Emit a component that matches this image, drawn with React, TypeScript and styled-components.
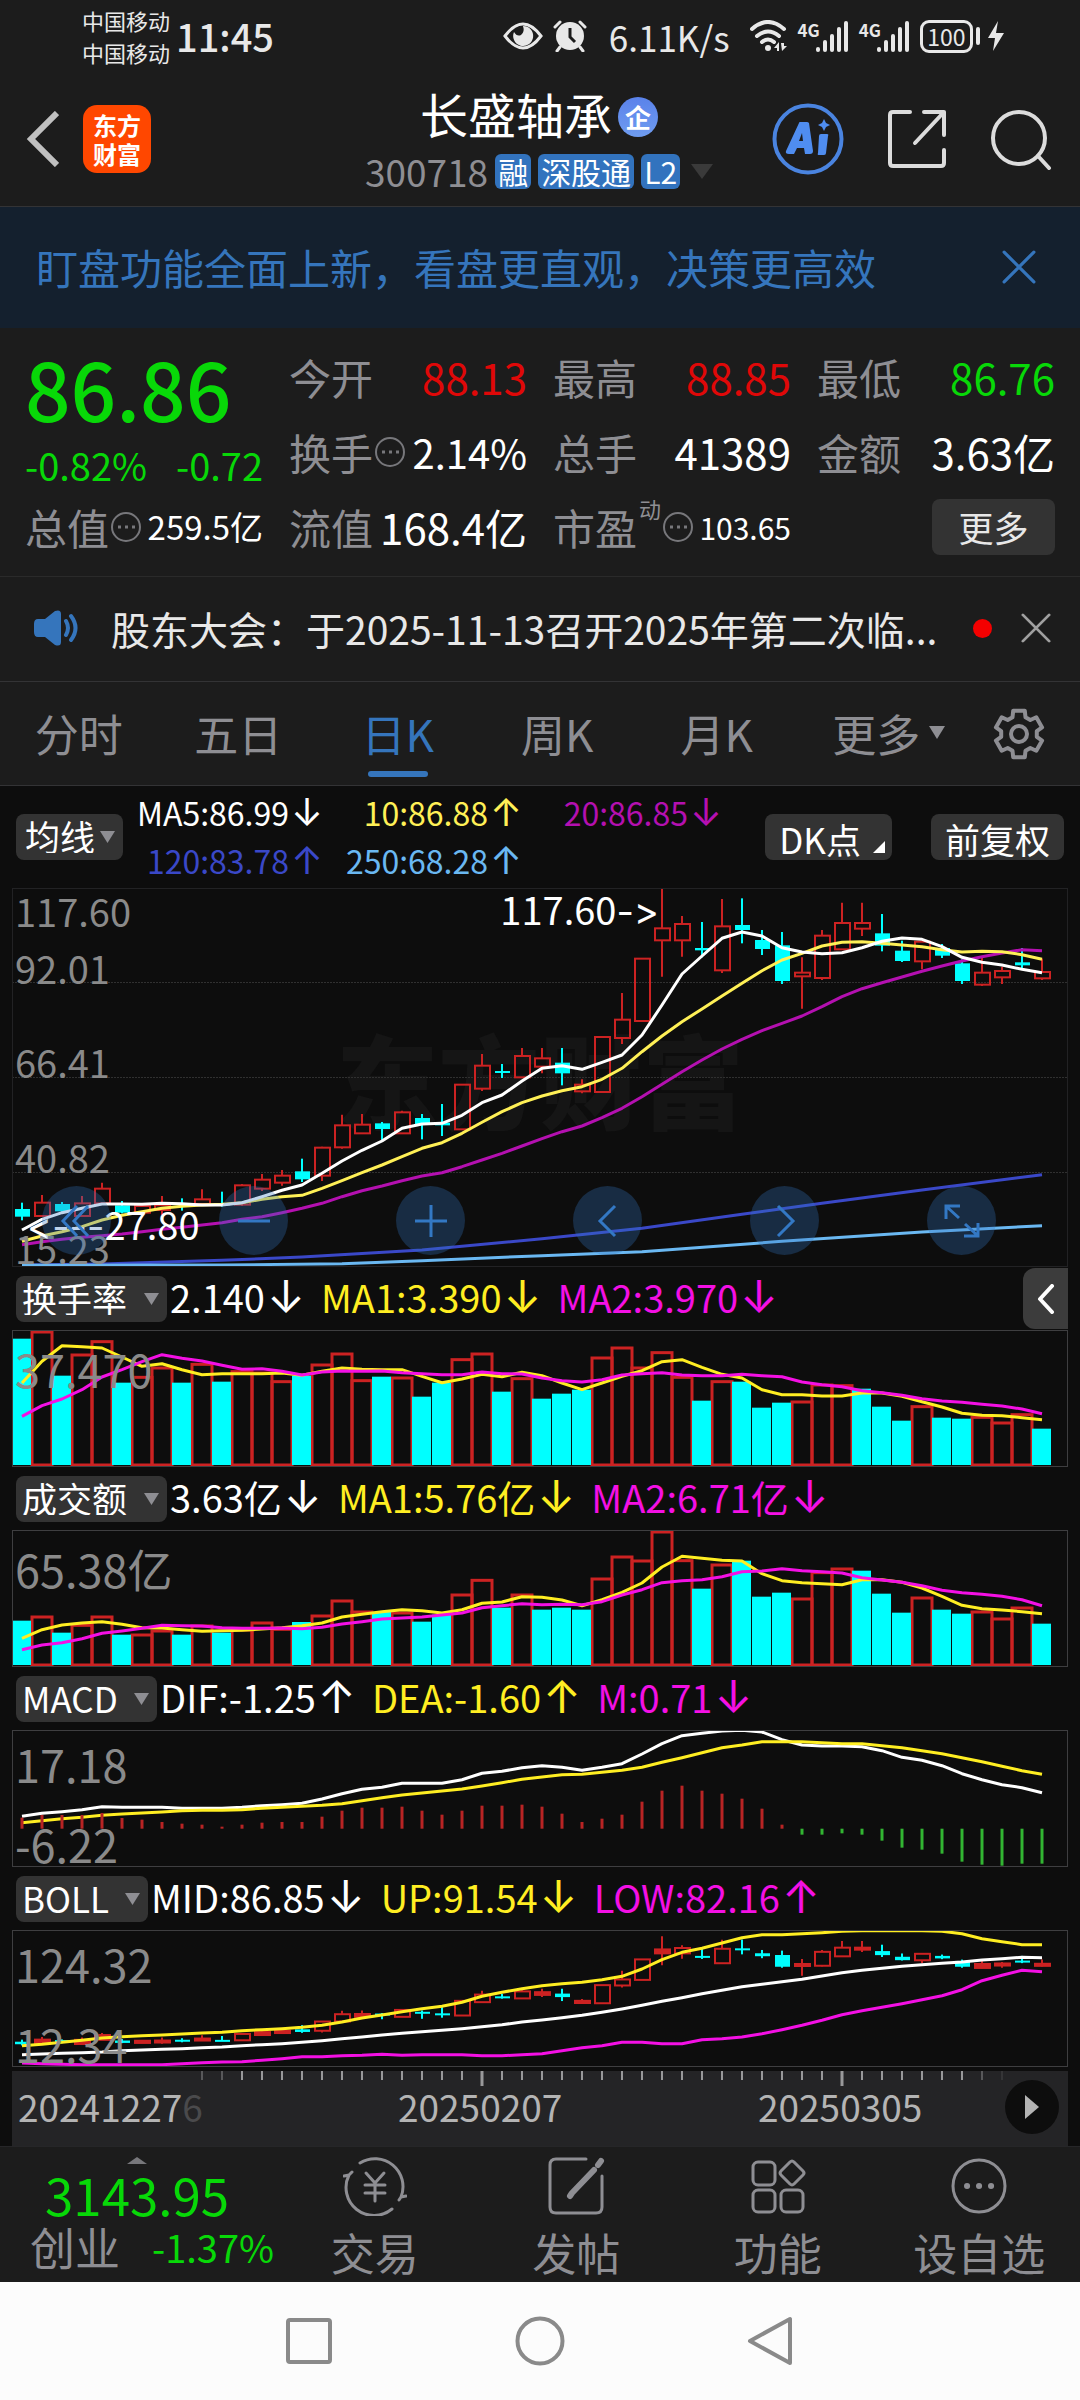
import React from "react";
import styled, { createGlobalStyle } from "styled-components";

const C = {
  panel: "#1c1c1c",
  chart: "#0d0d0d",
  line: "#333335",
  muted: "#8e8e93",
  text: "#e8e8e8",
  blue: "#3575bc",
  up: "#e00808",
  down: "#08d808",
  white: "#ffffff",
  yellow: "#ffee22",
  ma10: "#fff056",
  ma20: "#b410b0",
  ma120: "#3a48c8",
  ma250: "#6ab8f2",
  magenta: "#f410e4",
  candleUp: "#cc2222",
  cyan: "#00ffff",
};

const Global = createGlobalStyle`
  * { box-sizing: border-box; }
  body { margin: 0; background: ${C.chart}; }
  button, select { font: inherit; color: inherit; background: none; border: 0; padding: 0; margin: 0; }
  h1, p, dl, dd, dt { margin: 0; font-weight: 400; }
  svg { display: block; flex: none; }
`;

/* ---------- data ---------- */

// Each candle: rising flag, body top, body bottom, wick top, wick bottom (thirds of a pixel, panel top = 24)
const candles: [number, number, number, number, number][] = [
  [0, 987, 1010, 968, 1021], [1, 968, 1008, 945, 1010], [0, 972, 994, 966, 1000], [1, 970, 1008, 948, 1010],
  [1, 926, 970, 908, 972], [0, 976, 998, 963, 1000], [1, 978, 998, 976, 1000], [1, 976, 990, 948, 1005],
  [0, 969, 974, 955, 992], [1, 958, 972, 928, 974], [0, 970, 976, 935, 980], [1, 916, 974, 912, 978],
  [1, 899, 926, 882, 933], [1, 887, 908, 870, 917], [0, 874, 898, 836, 906], [1, 803, 887, 800, 903],
  [1, 736, 802, 704, 806], [1, 734, 760, 702, 762], [0, 730, 747, 726, 782], [1, 697, 760, 692, 762],
  [0, 714, 732, 702, 778], [0, 728, 736, 672, 768], [1, 614, 748, 612, 750], [1, 557, 626, 522, 633],
  [0, 573, 579, 552, 594], [1, 528, 592, 504, 594], [1, 535, 560, 504, 580], [0, 548, 580, 504, 616],
  [1, 614, 634, 598, 640], [1, 471, 636, 469, 638], [1, 419, 474, 339, 492], [1, 236, 423, 234, 425],
  [1, 145, 181, 24, 290], [1, 132, 181, 108, 230], [0, 204, 211, 126, 232], [1, 139, 271, 57, 279],
  [0, 135, 150, 55, 190], [0, 180, 207, 150, 225], [0, 196, 303, 156, 312], [1, 278, 289, 232, 386],
  [1, 167, 294, 150, 300], [1, 129, 208, 68, 210], [1, 129, 146, 68, 168], [0, 160, 197, 102, 214],
  [0, 212, 243, 182, 246], [1, 185, 244, 183, 268], [0, 204, 227, 192, 234], [0, 250, 303, 238, 312],
  [1, 278, 314, 232, 318], [1, 273, 292, 260, 312], [0, 247, 256, 204, 270], [1, 276, 295, 236, 300],
];

const ma5 = [1050, 1018, 998, 985, 972, 972, 973, 970, 971, 975, 975, 968, 950, 931, 915, 880, 843, 811, 783, 745, 732, 730, 706, 668, 645, 603, 565, 557, 568, 547, 525, 465, 375, 282, 228, 175, 156, 168, 203, 216, 221, 218, 203, 184, 174, 178, 200, 232, 247, 255, 268, 278];
const ma10 = [1084, 1068, 1055, 1040, 1020, 1006, 995, 985, 979, 975, 973, 968, 958, 950, 946, 925, 902, 878, 855, 830, 805, 788, 760, 727, 695, 668, 648, 632, 620, 598, 565, 515, 468, 425, 387, 348, 310, 272, 240, 220, 198, 187, 185, 190, 195, 200, 209, 216, 214, 215, 224, 238];
const ma20 = [1094, 1085, 1078, 1072, 1067, 1062, 1055, 1048, 1042, 1035, 1028, 1018, 1010, 998, 985, 970, 950, 932, 918, 902, 888, 878, 860, 840, 820, 798, 776, 755, 738, 713, 685, 650, 613, 575, 540, 507, 478, 452, 430, 408, 380, 350, 326, 308, 291, 274, 258, 243, 230, 219, 209, 212];
const ma120: [number, number][] = [[0, 1155], [4, 1152], [10, 1141], [14, 1131], [20, 1110], [26, 1076], [31, 1045], [36, 1003], [40, 970], [45, 930], [51, 884]];
const ma250: [number, number][] = [[0, 1156], [10, 1155], [16, 1151], [20, 1142], [26, 1127], [31, 1115], [38, 1084], [45, 1056], [51, 1037]];

const fallingVolume = new Set([0, 2, 5, 8, 10, 14, 18, 20, 21, 24, 26, 27, 28, 34, 36, 37, 38, 42, 43, 44, 46, 47, 51]);
const turnover = {
  top: 181,
  bars: [207, 184, 318, 253, 213, 339, 320, 292, 339, 281, 336, 303, 307, 333, 318, 283, 250, 330, 321, 322, 381, 339, 267, 250, 366, 324, 387, 372, 360, 262, 232, 292, 246, 320, 393, 333, 336, 414, 399, 394, 343, 345, 357, 411, 453, 408, 444, 447, 440, 457, 432, 477],
  a: [340, 275, 228, 231, 235, 262, 290, 282, 300, 315, 312, 312, 312, 310, 317, 305, 295, 299, 300, 300, 320, 339, 328, 314, 321, 308, 318, 340, 360, 340, 320, 303, 276, 270, 293, 314, 325, 360, 375, 375, 379, 379, 370, 370, 380, 396, 412, 431, 437, 438, 444, 450],
  b: [440, 408, 388, 360, 322, 300, 276, 255, 266, 274, 287, 299, 297, 305, 316, 307, 304, 305, 304, 309, 312, 315, 315, 307, 312, 313, 325, 333, 337, 330, 316, 312, 309, 316, 318, 318, 314, 318, 321, 337, 345, 351, 363, 369, 377, 387, 394, 398, 404, 409, 418, 432],
};
const amount = {
  top: 781,
  bars: [1053, 1039, 1089, 1064, 1039, 1095, 1093, 1081, 1095, 1066, 1089, 1078, 1057, 1076, 1057, 1036, 991, 1024, 1027, 1027, 1056, 1035, 973, 929, 1014, 973, 1020, 1014, 1020, 925, 859, 871, 784, 870, 957, 883, 873, 981, 969, 985, 906, 895, 903, 972, 1029, 982, 1020, 1032, 1024, 1045, 1012, 1062],
  a: [1106, 1080, 1066, 1060, 1056, 1064, 1074, 1075, 1080, 1085, 1083, 1082, 1078, 1074, 1068, 1060, 1042, 1034, 1026, 1020, 1023, 1030, 1020, 1001, 997, 981, 983, 991, 1008, 990, 968, 940, 892, 860, 866, 872, 874, 912, 933, 939, 942, 945, 930, 930, 938, 955, 980, 1007, 1017, 1021, 1026, 1032],
  b: [1140, 1126, 1119, 1107, 1091, 1084, 1076, 1067, 1068, 1069, 1074, 1076, 1076, 1075, 1077, 1073, 1063, 1056, 1048, 1045, 1042, 1036, 1030, 1014, 1008, 1002, 1005, 1004, 1005, 996, 976, 960, 939, 933, 930, 921, 906, 904, 897, 903, 906, 910, 924, 931, 938, 948, 962, 969, 974, 980, 990, 1008],
};
const macd = {
  bars: [444, 436, 436, 436, 430, 445, 450, 457, 462, 465, 471, 465, 459, 457, 457, 441, 423, 414, 414, 411, 423, 435, 423, 408, 408, 405, 411, 432, 457, 447, 435, 396, 363, 348, 363, 372, 387, 417, 465, 495, 495, 491, 495, 513, 534, 540, 552, 576, 585, 588, 582, 582],
  dif: [440, 431, 426, 420, 411, 413, 413, 413, 416, 416, 416, 413, 408, 405, 401, 388, 372, 359, 353, 341, 341, 341, 330, 311, 305, 294, 288, 293, 302, 293, 282, 253, 222, 198, 191, 184, 182, 187, 210, 226, 229, 229, 231, 243, 263, 272, 288, 312, 330, 345, 354, 369],
  dea: [459, 453, 447, 443, 437, 433, 430, 427, 423, 422, 422, 420, 416, 413, 410, 407, 402, 393, 384, 376, 370, 364, 358, 349, 339, 329, 322, 315, 314, 308, 302, 293, 278, 264, 249, 234, 226, 216, 216, 216, 219, 222, 222, 228, 234, 243, 252, 264, 276, 290, 303, 314],
};
const boll = {
  up: [1128, 1124, 1118, 1112, 1105, 1101, 1098, 1096, 1093, 1090, 1088, 1083, 1080, 1077, 1073, 1067, 1057, 1045, 1036, 1026, 1017, 1010, 998, 980, 968, 957, 948, 942, 938, 930, 920, 898, 870, 848, 836, 820, 804, 795, 795, 792, 789, 785, 783, 783, 783, 783, 785, 792, 807, 816, 825, 825],
  mid: [1155, 1153, 1151, 1149, 1147, 1143, 1141, 1139, 1137, 1134, 1132, 1128, 1125, 1122, 1118, 1113, 1107, 1102, 1096, 1091, 1086, 1082, 1077, 1071, 1065, 1057, 1051, 1044, 1037, 1028, 1018, 1007, 995, 984, 972, 962, 951, 944, 936, 929, 919, 909, 902, 896, 890, 885, 881, 877, 871, 867, 863, 864],
  low: [1180, 1182, 1184, 1185, 1185, 1185, 1185, 1185, 1182, 1179, 1177, 1176, 1172, 1167, 1161, 1161, 1158, 1157, 1154, 1157, 1155, 1155, 1155, 1158, 1158, 1155, 1152, 1143, 1134, 1128, 1118, 1118, 1122, 1122, 1110, 1107, 1102, 1092, 1080, 1067, 1052, 1035, 1023, 1013, 1002, 990, 978, 960, 933, 917, 902, 906],
};

const cx = (i: number) => i * 20 + 10;
const series = (values: number[], top: number) =>
  values.map((v, i) => `${cx(i)},${((v - top) / 3).toFixed(1)}`).join(" ");

/* ---------- chart drawings ---------- */

const Plot = styled.svg<{ $h: number }>`
  width: 100%;
  height: ${(p) => p.$h}px;
`;

function Line({ points, color, w = 3 }: { points: string; color: string; w?: number }) {
  return <polyline points={points} fill="none" stroke={color} strokeWidth={w} strokeLinejoin="round" />;
}

function Candles({ y, thin }: { y: (v: number) => number; thin?: boolean }) {
  return (
    <g>
      {candles.map(([up, t, b, hi, lo], i) => {
        const x = cx(i);
        const top = y(t);
        const h = Math.max(y(b) - top, 2);
        return up ? (
          <g key={i} stroke={C.candleUp} strokeWidth="2">
            <path d={`M${x} ${y(hi)}V${top}M${x} ${top + h}V${Math.max(y(lo), top + h)}`} />
            <rect x={x - 7} y={top} width="15" height={h} fill={thin && h < 5 ? C.candleUp : "none"} />
          </g>
        ) : (
          <g key={i} fill={C.cyan}>
            <rect x={x - 1} y={y(hi)} width="2" height={y(lo) - y(hi)} />
            <rect x={x - 7} y={top} width="15" height={h} />
          </g>
        );
      })}
    </g>
  );
}

function PricePlot() {
  const y = (v: number) => (v - 24) / 3;
  const sparse = (s: [number, number][]) => s.map(([i, v]) => `${cx(i)},${y(v).toFixed(1)}`).join(" ");
  return (
    <Plot $h={377} viewBox="1 1 1054 377" preserveAspectRatio="none" role="img" aria-label="日K线图">
      {[94, 189, 284].map((g) => (
        <path key={g} d={`M0 ${g + 0.5}H1056`} stroke="#303030" strokeDasharray="2 1" />
      ))}
      <Candles y={y} />
      <Line points={sparse(ma120)} color={C.ma120} />
      <Line points={sparse(ma250)} color={C.ma250} />
      <Line points={series(ma20, 24)} color={C.ma20} />
      <Line points={series(ma10, 24)} color={C.ma10} />
      <Line points={series(ma5, 24)} color={C.white} />
    </Plot>
  );
}

function BarPlot({ data, label }: { data: typeof turnover; label: string }) {
  return (
    <Plot $h={135} viewBox="1 1 1054 135" preserveAspectRatio="none" role="img" aria-label={label}>
      {data.bars.map((v, i) => {
        const y = (v - data.top) / 3;
        return fallingVolume.has(i) ? null : (
          <rect key={i} x={i * 20} y={y + 1} width="20" height={134 - y} fill="none" stroke={C.candleUp} strokeWidth="3" />
        );
      })}
      {data.bars.map((v, i) => {
        const y = (v - data.top) / 3;
        return fallingVolume.has(i) ? <rect key={i} x={i * 20} y={y} width="19" height={135 - y} fill={C.cyan} /> : null;
      })}
      <Line points={series(data.a, data.top)} color={C.yellow} />
      <Line points={series(data.b, data.top)} color={C.magenta} />
    </Plot>
  );
}

function MacdPlot() {
  return (
    <Plot $h={135} viewBox="1 1 1054 135" preserveAspectRatio="none" role="img" aria-label="MACD">
      <Line points={series(macd.dif, 181)} color={C.white} />
      <Line points={series(macd.dea, 181)} color={C.yellow} />
      {macd.bars.map((v, i) => (
        <path key={i} d={`M${cx(i)} 98.7V${(v - 181) / 3}`} stroke={v > 477 ? "#32b432" : "#b82424"} strokeWidth="3" />
      ))}
    </Plot>
  );
}

function BollPlot() {
  const y = (v: number) => (6.72 + (v - 24) / 11.08) * 1.2145 - 2;
  return (
    <Plot $h={135} viewBox="1 1 1054 135" preserveAspectRatio="none" role="img" aria-label="BOLL">
      <Candles y={y} thin />
      <Line points={series(boll.up, 781)} color={C.yellow} />
      <Line points={series(boll.mid, 781)} color={C.white} />
      <Line points={series(boll.low, 781)} color={C.magenta} />
    </Plot>
  );
}

/* ---------- shared parts ---------- */

const Page = styled.main`
  display: flex;
  flex-direction: column;
  min-height: 100vh;
  color: ${C.text};
  font-family: "Noto Sans CJK SC", "Noto Sans", sans-serif;
  line-height: 1;
  white-space: nowrap;
`;

const IconButton = styled.button`
  display: flex;
  align-items: center;
  justify-content: center;
`;

const Trend = styled.span`
  margin-left: 2px;
  font-family: "Inter", "DejaVu Sans", sans-serif;
  font-size: 1.2em;
  line-height: 0;
`;

const Pointer = styled.span`
  font-family: "Inter", "DejaVu Sans", sans-serif;
  font-feature-settings: "calt" 0;
  line-height: 0;
`;

function Close({ size, color }: { size: number; color: string }) {
  return (
    <svg width={size} height={size} viewBox="0 0 32 32" stroke={color} strokeWidth="3" strokeLinecap="round">
      <path d="M2 2 30 30M30 2 2 30" />
    </svg>
  );
}

function Caret({ w, h, color }: { w: number; h: number; color: string }) {
  return (
    <svg width={w} height={h} viewBox="0 0 10 10" preserveAspectRatio="none">
      <path d="M0 0H10L5 10Z" fill={color} />
    </svg>
  );
}

/* ---------- status bar ---------- */

const Status = styled.div`
  display: flex;
  align-items: center;
  justify-content: space-between;
  height: 72px;
  padding: 0 76px 0 82px;
  background: ${C.panel};
`;
const StatusSide = styled.div<{ $gap: number }>`
  display: flex;
  align-items: center;
  gap: ${(p) => p.$gap}px;
`;
const Carrier = styled.div`
  font-size: 22px;
  line-height: 32px;
`;
const Clock = styled.time`
  font-size: 38px;
  font-weight: 500;
`;
const Speed = styled.span`
  margin: 0 10px 0 12px;
  font-size: 35px;
`;
const Signal = styled.span`
  display: flex;
  align-items: flex-start;
`;
const Gen = styled.span`
  margin-right: -4px;
  font-size: 17px;
  font-weight: 700;
`;
const Battery = styled.span`
  display: grid;
  place-items: center;
  width: 53px;
  height: 33px;
  border: 3px solid ${C.text};
  border-radius: 9px;
  font-size: 23px;
`;

function Bars() {
  return (
    <svg width="33" height="31" viewBox="0 0 33 31" fill={C.text}>
      {[5, 12, 18, 25, 31].map((h, i) => (
        <rect key={h} x={i * 7} y={31 - h} width="4" height={h} rx="2" />
      ))}
    </svg>
  );
}

function StatusBar() {
  return (
    <Status>
      <StatusSide $gap={6}>
        <Carrier>
          中国移动
          <br />
          中国移动
        </Carrier>
        <Clock>11:45</Clock>
      </StatusSide>
      <StatusSide $gap={10}>
        <svg width="40" height="28" viewBox="0 0 40 28" fill="none" stroke={C.text} strokeWidth="3">
          <path d="M2 14Q20 -10 38 14Q20 38 2 14Z" />
          <path d="M20 4a10 10 0 1 1-9 6q3 5 7 3 4-3 2-9Z" fill={C.text} stroke="none" />
        </svg>
        <svg width="34" height="32" viewBox="0 0 34 32" fill={C.text}>
          <circle cx="17" cy="16" r="14" />
          <path d="M17 8V17L22 22" stroke={C.panel} strokeWidth="3" fill="none" />
          <path d="M2 7 7 2M32 7 27 2M7 27 4 31M27 27 30 31" stroke={C.text} strokeWidth="3" strokeLinecap="round" />
        </svg>
        <Speed>6.11K/s</Speed>
        <svg width="38" height="32" viewBox="0 0 38 32" fill="none" stroke={C.text} strokeWidth="4" strokeLinecap="round">
          <path d="M2 9Q18 -5 34 9M7 16Q18 7 29 16M12 22Q18 17 24 22" />
          <circle cx="18" cy="28" r="3" fill={C.text} stroke="none" />
          <path d="M24 28 29 22V31H27V28ZM32 31 37 26H34V23H31Z" fill={C.text} stroke="none" />
        </svg>
        <Signal>
          <Gen>4G</Gen>
          <Bars />
        </Signal>
        <Signal>
          <Gen>4G</Gen>
          <Bars />
        </Signal>
        <StatusSide $gap={3}>
          <Battery>100</Battery>
          <svg width="28" height="30" viewBox="0 0 28 30" fill={C.text}>
            <rect x="0" y="6" width="4" height="18" rx="2" />
            <path d="M22 0 12 17H19L17 30 28 12H20Z" />
          </svg>
        </StatusSide>
      </StatusSide>
    </Status>
  );
}

/* ---------- title bar ---------- */

const Header = styled.header`
  display: grid;
  grid-template-columns: 1fr auto 1fr;
  align-items: center;
  height: 135px;
  padding: 0 28px 0 26px;
  background: ${C.panel};
  border-bottom: 1px solid ${C.line};
`;
const HeadLeft = styled.div`
  display: flex;
  align-items: center;
  gap: 24px;
`;
const HeadRight = styled.div`
  display: flex;
  align-items: center;
  justify-content: flex-end;
  gap: 43px;
`;
const Logo = styled.span`
  display: grid;
  place-items: center;
  align-content: center;
  width: 68px;
  height: 68px;
  border-radius: 14px;
  background: #ff4700;
  color: #fff;
  font-size: 24px;
  font-weight: 700;
  line-height: 29px;
`;
const HeadMid = styled.div`
  display: flex;
  flex-direction: column;
  align-items: center;
  gap: 16px;
`;
const TitleRow = styled.div`
  display: flex;
  align-items: flex-end;
  gap: 6px;
`;
const Title = styled.h1`
  font-size: 48px;
  color: #fff;
`;
const Ent = styled.span`
  display: grid;
  place-items: center;
  width: 40px;
  height: 40px;
  border-radius: 50%;
  background: linear-gradient(#5a82ea, #6f9cf0);
  color: #fff;
  font-size: 26px;
  font-weight: 700;
`;
const CodeRow = styled.div`
  display: flex;
  align-items: center;
  gap: 7px;
  color: ${C.muted};
  font-size: 37px;
`;
const Tag = styled.span`
  padding: 0 3px;
  border-radius: 6px;
  background: #3273be;
  color: #fff;
  font-size: 30px;
  line-height: 35px;
`;
const CodeCaret = styled.button`
  display: flex;
  padding: 0 0 0 4px;
`;

function TitleBar() {
  return (
    <Header>
      <HeadLeft>
        <IconButton aria-label="返回">
          <svg width="33" height="56" viewBox="0 0 33 56" fill="none" stroke="#c0c0c0" strokeWidth="6">
            <path d="M31 2 5 28 31 54" />
          </svg>
        </IconButton>
        <Logo>
          <span>东方</span>
          <span>财富</span>
        </Logo>
      </HeadLeft>
      <HeadMid>
        <TitleRow>
          <Title>长盛轴承</Title>
          <Ent>企</Ent>
        </TitleRow>
        <CodeRow>
          <span>300718</span>
          <Tag>融</Tag>
          <Tag>深股通</Tag>
          <Tag>L2</Tag>
          <CodeCaret aria-label="展开">
            <Caret w={22} h={15} color="#3a3a3a" />
          </CodeCaret>
        </CodeRow>
      </HeadMid>
      <HeadRight>
        <IconButton aria-label="Ai">
          <svg width="72" height="72" viewBox="0 0 72 72" fill="#4f8df0">
            <circle cx="36" cy="36" r="33.5" fill="none" stroke="#4a84e0" strokeWidth="4" />
            <path fillRule="evenodd" d="M27 20Q27 19 28 19H35Q36 19 37 20L41 48Q41 51 38 51H33L32 45H25L22 51H17Q13 51 14 48ZM30 30 27 38H31Z" />
            <path d="M49 31H55Q57 31 56 33L54 50Q54 52 52 52H47Q45 52 46 50L47 33Q47 31 49 31ZM52 16 54 20 58 22 54 24 52 28 50 24 46 22 50 20Z" />
          </svg>
        </IconButton>
        <IconButton aria-label="分享">
          <svg width="60" height="60" viewBox="0 0 60 60" fill="none" stroke="#dcdcdc" strokeWidth="4" strokeLinecap="round" strokeLinejoin="round">
            <path d="M23 3H6Q3 3 3 6V54Q3 57 6 57H54Q57 57 57 54V41" />
            <path d="M37 3H57V26M57 3 28 34" />
          </svg>
        </IconButton>
        <IconButton aria-label="搜索">
          <svg width="62" height="62" viewBox="0 0 62 62" fill="none" stroke="#dcdcdc" strokeWidth="4" strokeLinecap="round">
            <circle cx="29" cy="30" r="26" />
            <path d="M48 48 59 60" />
          </svg>
        </IconButton>
      </HeadRight>
    </Header>
  );
}

/* ---------- banner, quote, news ---------- */

const Banner = styled.aside`
  display: flex;
  align-items: center;
  justify-content: space-between;
  height: 121px;
  padding: 0 44px 2px 36px;
  background: #14202e;
  color: ${C.blue};
  font-size: 42px;
`;

const Quote = styled.section`
  display: grid;
  grid-template-columns: repeat(4, 1fr);
  grid-template-rows: repeat(3, 75px);
  column-gap: 26px;
  padding: 11px 25px 12px;
  background: ${C.panel};
  border-bottom: 1px solid #2a2a2a;
`;
const Price = styled.div`
  display: flex;
  flex-direction: column;
  justify-content: space-between;
  grid-row: span 2;
  padding: 8px 0 5px;
  color: ${C.down};
`;
const Last = styled.strong`
  font-size: 80px;
  font-weight: 500;
`;
const Change = styled.div`
  display: flex;
  justify-content: space-between;
  font-size: 38px;
`;
const Cell = styled.dl`
  display: flex;
  align-items: center;
  justify-content: space-between;
`;
const Term = styled.dt`
  display: flex;
  align-items: center;
  gap: 2px;
  color: ${C.muted};
  font-size: 42px;
`;
const Super = styled.sup`
  align-self: flex-start;
  font-size: 22px;
  line-height: 4px;
`;
const Value = styled.dd<{ $size: number; $color: string }>`
  font-size: ${(p) => p.$size}px;
  color: ${(p) => p.$color};
`;
const More = styled.button`
  align-self: center;
  justify-self: end;
  width: 123px;
  height: 56px;
  border-radius: 8px;
  background: #333;
  font-size: 35px;
`;

function Info() {
  return (
    <svg width="30" height="30" viewBox="0 0 30 30" fill="none" stroke="#77777b" strokeWidth="2">
      <circle cx="15" cy="15" r="14" />
      <path d="M7 15h3M14 15h3M21 15h3" strokeWidth="3" />
    </svg>
  );
}

type Field = { label: string; value: string; color?: string; size?: number; info?: boolean; sup?: string };
const fields: Field[] = [
  { label: "今开", value: "88.13", color: C.up },
  { label: "最高", value: "88.85", color: C.up },
  { label: "最低", value: "86.76", color: C.down },
  { label: "换手", value: "2.14%", info: true, size: 40 },
  { label: "总手", value: "41389" },
  { label: "金额", value: "3.63亿" },
  { label: "总值", value: "259.5亿", info: true, size: 33 },
  { label: "流值", value: "168.4亿" },
  { label: "市盈", value: "103.65", info: true, size: 30, sup: "动" },
];

function QuotePanel() {
  return (
    <Quote>
      <Price>
        <Last>86.86</Last>
        <Change>
          <span>-0.82%</span>
          <span>-0.72</span>
        </Change>
      </Price>
      {fields.map((f) => (
        <Cell key={f.label}>
          <Term>
            {f.label}
            {f.sup && <Super>{f.sup}</Super>}
            {f.info && <Info />}
          </Term>
          <Value $size={f.size ?? 42} $color={f.color ?? "#fff"}>
            {f.value}
          </Value>
        </Cell>
      ))}
      <More>更多</More>
    </Quote>
  );
}

const News = styled.section`
  display: flex;
  align-items: center;
  height: 105px;
  padding: 0 29px 2px 33px;
  background: ${C.panel};
  border-bottom: 1px solid ${C.line};
`;
const Headline = styled.a`
  flex: 1;
  margin-left: 32px;
  overflow: hidden;
  color: inherit;
  text-decoration: none;
  font-size: 39px;
  line-height: 56px;
`;
const Dot = styled.span`
  width: 19px;
  height: 19px;
  margin-right: 29px;
  border-radius: 50%;
  background: #f40000;
`;

function NewsBar() {
  return (
    <News>
      <svg width="46" height="36" viewBox="0 0 46 36" fill={C.blue}>
        <path d="M5 9H12L22 1Q28 -1 28 4V32Q28 37 22 35L12 27H5Q1 27 1 22V14Q1 9 5 9Z" />
        <path d="M33 11Q37 18 33 25M38 6Q47 18 38 30" fill="none" stroke={C.blue} strokeWidth="4" strokeLinecap="round" />
      </svg>
      <Headline href="#news">股东大会：于2025-11-13召开2025年第二次临...</Headline>
      <Dot />
      <IconButton aria-label="关闭公告">
        <Close size={30} color="#a0a0a0" />
      </IconButton>
    </News>
  );
}

/* ---------- period tabs ---------- */

const Tabs = styled.nav`
  display: flex;
  height: 104px;
  background: ${C.panel};
  border-bottom: 1px solid ${C.line};
`;
const Tab = styled.button<{ $on?: boolean }>`
  position: relative;
  display: flex;
  flex: 1;
  align-items: center;
  justify-content: center;
  padding: 0 2px 2px 0;
  color: ${(p) => (p.$on ? C.blue : C.muted)};
  font-size: 44px;
  &::after {
    content: "";
    display: ${(p) => (p.$on ? "block" : "none")};
    position: absolute;
    bottom: 8px;
    width: 60px;
    height: 6px;
    border-radius: 3px;
    background: ${C.blue};
  }
`;
const TabCaret = styled.span`
  position: absolute;
  right: 12px;
`;
const Gear = styled(IconButton)`
  width: 123px;
`;

const gearPath = (() => {
  const pts: string[] = [];
  for (let k = 0; k < 6; k++) {
    for (const [da, r] of [[-21, 18], [-14, 24], [14, 24], [21, 18]]) {
      const a = ((k * 60 - 90 + da) * Math.PI) / 180;
      pts.push(`${(26 + r * Math.cos(a)).toFixed(1)} ${(26 + r * Math.sin(a)).toFixed(1)}`);
    }
  }
  return `M${pts.join("L")}Z`;
})();

function PeriodTabs() {
  return (
    <Tabs>
      {["分时", "五日", "日K", "周K", "月K"].map((t) => (
        <Tab key={t} $on={t === "日K"}>
          {t}
        </Tab>
      ))}
      <Tab>
        更多
        <TabCaret>
          <Caret w={16} h={13} color={C.muted} />
        </TabCaret>
      </Tab>
      <Gear aria-label="设置">
        <svg width="52" height="52" viewBox="0 0 52 52" fill="none" stroke={C.muted} strokeWidth="4" strokeLinejoin="round">
          <path d={gearPath} />
          <circle cx="26" cy="26" r="8" />
        </svg>
      </Gear>
    </Tabs>
  );
}

/* ---------- charts ---------- */

const Charts = styled.section`
  flex: 1;
  padding: 0 12px;
  background: ${C.chart};
`;
const Toolbar = styled.div`
  display: flex;
  align-items: center;
  height: 102px;
  padding: 0 4px;
`;
const Picker = styled.label<{ $gap: number; $pad: number }>`
  display: flex;
  align-items: center;
  gap: ${(p) => p.$gap}px;
  height: 46px;
  padding: 0 8px 0 ${(p) => p.$pad}px;
  border-radius: 8px;
  background: #333;
  color: #fff;
  font-size: 35px;
`;
const PickerSelect = styled.select`
  appearance: none;
  height: 46px;
  padding-bottom: 3px;
`;
const Averages = styled.div`
  display: grid;
  grid-template-columns: auto 166px 167px;
  column-gap: 33px;
  margin-left: 14px;
  padding-bottom: 3px;
  justify-items: end;
  font-size: 32px;
  line-height: 48px;
`;
const Tint = styled.span<{ $color: string }>`
  color: ${(p) => p.$color};
`;
const ToolButtons = styled.div`
  display: flex;
  gap: 39px;
  margin-left: auto;
  color: #fff;
  font-size: 35px;
`;
const Tool = styled.button`
  display: flex;
  align-items: flex-end;
  height: 46px;
  padding: 0 14px;
  border-radius: 8px;
  background: #333;
  line-height: 43px;
`;
const ToolCorner = styled.svg`
  margin: 0 -7px 7px 12px;
`;

const Frame = styled.div<{ $line: string }>`
  position: relative;
  border: 1px solid ${(p) => p.$line};
`;
const Scale = styled.span<{ $top: number; $size: number }>`
  position: absolute;
  top: ${(p) => p.$top}px;
  left: 2px;
  color: #8a8a8a;
  font-size: ${(p) => p.$size}px;
`;
const Watermark = styled.span`
  position: absolute;
  inset: 0;
  display: grid;
  place-items: center;
  color: #151515;
  font-size: 102px;
  font-weight: 900;
  line-height: 80px;
`;
const PlotLayer = styled.div`
  position: relative;
`;
const Peak = styled.span`
  position: absolute;
  top: 1px;
  right: 408px;
  color: #fff;
  font-size: 38px;
`;
const Trough = styled.span`
  position: absolute;
  top: 316px;
  left: 14px;
  color: #fff;
  font-size: 38px;
`;
const Pads = styled.div`
  position: absolute;
  left: 29px;
  right: 71px;
  bottom: 11px;
  display: flex;
  justify-content: space-between;
`;
const Pad = styled.button`
  display: grid;
  place-items: center;
  width: 69px;
  height: 69px;
  border-radius: 50%;
  background: rgba(50, 117, 193, 0.3);
`;

const pads: [string, string][] = [
  ["最左", "M18 3 4 18 18 33M29 3 15 18 29 33"],
  ["缩小", "M2 18H34"],
  ["放大", "M2 18H34M18 2V34"],
  ["左移", "M25 3 10 18 25 33"],
  ["右移", "M11 3 26 18 11 33"],
  ["全屏", "M2 16V3H16M3 4 15 15M34 20V33H20M33 32 21 21"],
];

function PriceChart() {
  return (
    <Frame $line="#222224">
      <Watermark>东方财富</Watermark>
      <PlotLayer>
        <PricePlot />
      </PlotLayer>
      <Scale $top={3} $size={38}>117.60</Scale>
      <Scale $top={60} $size={38}>92.01</Scale>
      <Scale $top={154} $size={38}>66.41</Scale>
      <Scale $top={249} $size={38}>40.82</Scale>
      <Scale $top={340} $size={38}>15.23</Scale>
      <Peak>
        117.60<Pointer>-&gt;</Pointer>
      </Peak>
      <Trough>
        <Pointer>&lt;---</Pointer>27.80
      </Trough>
      <Pads>
        {pads.map(([name, d]) => (
          <Pad key={name} aria-label={name}>
            <svg width="36" height="36" viewBox="0 0 36 36" fill="none" stroke="#3378c4" strokeWidth="3">
              <path d={d} />
            </svg>
          </Pad>
        ))}
      </Pads>
    </Frame>
  );
}

const SubHead = styled.div`
  display: flex;
  align-items: center;
  height: 63px;
  padding-left: 4px;
  font-size: 38px;
`;
const Readings = styled.div`
  display: flex;
  gap: 16px;
  margin-left: 3px;
  padding-bottom: 3px;
`;
const Fold = styled.button`
  display: grid;
  place-items: center;
  width: 45px;
  height: 61px;
  margin-left: auto;
  border-radius: 12px 0 0 12px;
  background: #3c3c3c;
`;

type Reading = [string, string, string];

function Indicator({ name, readings, scale, fold, children }: {
  name: string;
  readings: Reading[];
  scale: [number, string][];
  fold?: boolean;
  children: React.ReactNode;
}) {
  return (
    <>
      <SubHead>
        <Picker $gap={16} $pad={6}>
          <PickerSelect aria-label="指标" defaultValue={name}>
            <option>{name}</option>
          </PickerSelect>
          <Caret w={15} h={12} color={C.muted} />
        </Picker>
        <Readings>
          {readings.map(([text, arrow, color]) => (
            <Tint key={text} $color={color}>
              {text}
              <Trend>{arrow}</Trend>
            </Tint>
          ))}
        </Readings>
        {fold && (
          <Fold aria-label="展开侧栏">
            <svg width="18" height="30" viewBox="0 0 18 30" fill="none" stroke="#fff" strokeWidth="4" strokeLinecap="round" strokeLinejoin="round">
              <path d="M15 2 3 15 15 28" />
            </svg>
          </Fold>
        )}
      </SubHead>
      <Frame $line="#3e3e40">
        {children}
        {scale.map(([top, text]) => (
          <Scale key={text} $top={top} $size={45}>
            {text}
          </Scale>
        ))}
      </Frame>
    </>
  );
}

const Axis = styled.div`
  margin-top: 4px;
  padding-bottom: 19px;
  background: #242426;
`;
const AxisRow = styled.div`
  display: flex;
  align-items: center;
  height: 40px;
  padding: 0 9px 0 6px;
  color: #b4b4b4;
  font-size: 37px;
  line-height: 34px;
`;
const Next = styled.button`
  display: grid;
  flex: none;
  place-items: center;
  width: 54px;
  height: 54px;
  margin-left: auto;
  border-radius: 50%;
  background: ${C.chart};
`;
const AxisFirst = styled.span`
  flex: none;
  width: 186px;
  padding-bottom: 3px;
`;
const AxisDate = styled.span`
  flex: none;
  width: 166px;
  margin-left: 194px;
  padding-bottom: 3px;
`;
const Ghost = styled.span`
  color: #4a4a4c;
`;

function TimeAxis() {
  return (
    <Axis>
      <Plot $h={16} viewBox="0 0 1056 16" preserveAspectRatio="none">
        {Array.from({ length: 41 }, (_, k) => k + 9).map((i) => {
          const major = i === 23 || i === 41;
          const fade = i < 11 || i > 47 ? (i === 49 ? 0.15 : 0.45) : 1;
          return <path key={i} d={`M${cx(i)} 0V${major ? 15 : 9}`} stroke="#98989a" strokeWidth={major ? 3 : 2} opacity={fade} />;
        })}
      </Plot>
      <AxisRow>
        <AxisFirst>
          20241227<Ghost>6</Ghost>
        </AxisFirst>
        <AxisDate>20250207</AxisDate>
        <AxisDate>20250305</AxisDate>
        <Next aria-label="播放">
          <svg width="14" height="24" viewBox="0 0 14 24">
            <path d="M0 0 14 12 0 24Z" fill="#b4b4b4" />
          </svg>
        </Next>
      </AxisRow>
    </Axis>
  );
}

/* ---------- bottom bars ---------- */

const Bottom = styled.nav`
  display: grid;
  grid-template-columns: 274px repeat(4, 1fr);
  height: 136px;
  background: ${C.panel};
  border-top: 1px solid #262628;
  color: ${C.muted};
`;
const Index = styled.button`
  display: grid;
  justify-items: center;
  align-content: start;
  padding-top: 10px;
  row-gap: 3px;
`;
const IndexValue = styled.span`
  color: ${C.down};
  font-size: 51px;
  line-height: 54px;
`;
const IndexRow = styled.span`
  display: flex;
  align-items: center;
  gap: 32px;
  padding-left: 30px;
  font-size: 45px;
`;
const IndexPct = styled.span`
  color: ${C.down};
  font-size: 38px;
`;
const NavItem = styled.button`
  display: flex;
  flex-direction: column;
  align-items: center;
  justify-content: space-between;
  padding: 9px 0 8px;
  font-size: 44px;
`;

function NavIcon({ children }: { children: React.ReactNode }) {
  return (
    <svg width="64" height="60" viewBox="-32 -30 64 60" fill="none" stroke={C.muted} strokeWidth="3" strokeLinecap="round" strokeLinejoin="round">
      {children}
    </svg>
  );
}

const navItems: [string, React.ReactNode][] = [
  ["交易", <>
    <path d="M-15 -23A28 28 0 0 1 26 11L24 14M26 11 31 10" />
    <path d="M17 23A28 28 0 0 1 -26 -11L-31 -10M-26 -11 -23 -14" />
    <path d="M-9 -13 0 -3 9 -13M0 -3V15M-10 -1H10M-10 7H10" />
  </>],
  ["发帖", <>
    <path d="M10 -27H-20Q-26 -27 -26 -21V21Q-26 27 -20 27H20Q26 27 26 21V-10" />
    <path d="M18 -16 -4 7 -6 10" strokeWidth="6" />
    <path d="M22 -21 25 -25" strokeWidth="6" />
  </>],
  ["功能", <>
    <rect x="-25" y="-24" width="22" height="23" rx="5" />
    <rect x="-25" y="4" width="22" height="22" rx="5" />
    <rect x="3" y="4" width="22" height="22" rx="5" />
    <path d="M12 -24Q14 -26 16 -24L25 -15Q27 -13 25 -11L16 -2Q14 0 12 -2L3 -11Q1 -13 3 -15Z" />
  </>],
  ["设自选", <>
    <circle r="26" />
    <path d="M-12 0h.1M0 0h.1M12 0h.1" strokeWidth="6" />
  </>],
];

const System = styled.nav`
  display: flex;
  align-items: center;
  justify-content: center;
  gap: 181px;
  height: 118px;
  background: #fcfcfc;
`;

function BottomBars() {
  return (
    <>
      <Bottom>
        <Index>
          <svg width="20" height="7" viewBox="0 0 20 7">
            <path d="M0 7 10 0 20 7Z" fill="#77777b" />
          </svg>
          <IndexValue>3143.95</IndexValue>
          <IndexRow>
            创业<IndexPct>-1.37%</IndexPct>
          </IndexRow>
        </Index>
        {navItems.map(([name, icon]) => (
          <NavItem key={name}>
            <NavIcon>{icon}</NavIcon>
            {name}
          </NavItem>
        ))}
      </Bottom>
      <System>
        {[
          ["最近任务", <rect x="4" y="4" width="42" height="42" rx="2" />],
          ["主页", <circle cx="25" cy="25" r="22.5" />],
          ["后退", <path d="M44 3V47L4 25Z" />],
        ].map(([name, shape]) => (
          <IconButton key={name as string} aria-label={name as string}>
            <svg width="50" height="50" viewBox="0 0 50 50" fill="none" stroke="#8a8a8a" strokeWidth="4" strokeLinejoin="round">
              {shape}
            </svg>
          </IconButton>
        ))}
      </System>
    </>
  );
}

export default function App() {
  return (
    <Page lang="zh-CN">
      <Global />
      <StatusBar />
      <TitleBar />
      <Banner>
        <span>盯盘功能全面上新，看盘更直观，决策更高效</span>
        <IconButton aria-label="关闭提示">
          <Close size={34} color={C.blue} />
        </IconButton>
      </Banner>
      <QuotePanel />
      <NewsBar />
      <PeriodTabs />
      <Charts>
        <Toolbar>
          <Picker $gap={4} $pad={9}>
            <PickerSelect aria-label="主图指标" defaultValue="均线">
              <option>均线</option>
            </PickerSelect>
            <Caret w={15} h={12} color={C.muted} />
          </Picker>
          <Averages>
            <Tint $color="#fff">MA5:86.99<Trend>↓</Trend></Tint>
            <Tint $color={C.ma10}>10:86.88<Trend>↑</Trend></Tint>
            <Tint $color={C.ma20}>20:86.85<Trend>↓</Trend></Tint>
            <Tint $color={C.ma120}>120:83.78<Trend>↑</Trend></Tint>
            <Tint $color={C.ma250}>250:68.28<Trend>↑</Trend></Tint>
          </Averages>
          <ToolButtons>
            <Tool>
              DK点
              <ToolCorner width="12" height="12" viewBox="0 0 12 12">
                <path d="M12 0V12H0Z" fill="#fff" />
              </ToolCorner>
            </Tool>
            <Tool>前复权</Tool>
          </ToolButtons>
        </Toolbar>
        <PriceChart />
        <Indicator
          name="换手率"
          fold
          readings={[["2.140", "↓", "#fff"], ["MA1:3.390", "↓", C.yellow], ["MA2:3.970", "↓", C.magenta]]}
          scale={[[15, "37.470"]]}
        >
          <BarPlot data={turnover} label="换手率" />
        </Indicator>
        <Indicator
          name="成交额"
          readings={[["3.63亿", "↓", "#fff"], ["MA1:5.76亿", "↓", C.yellow], ["MA2:6.71亿", "↓", C.magenta]]}
          scale={[[15, "65.38亿"]]}
        >
          <BarPlot data={amount} label="成交额" />
        </Indicator>
        <Indicator
          name="MACD"
          readings={[["DIF:-1.25", "↑", "#fff"], ["DEA:-1.60", "↑", C.yellow], ["M:0.71", "↓", C.magenta]]}
          scale={[[10, "17.18"], [90, "-6.22"]]}
        >
          <MacdPlot />
        </Indicator>
        <Indicator
          name="BOLL"
          readings={[["MID:86.85", "↓", "#fff"], ["UP:91.54", "↓", C.yellow], ["LOW:82.16", "↑", C.magenta]]}
          scale={[[10, "124.32"], [90, "12.34"]]}
        >
          <BollPlot />
        </Indicator>
        <TimeAxis />
      </Charts>
      <BottomBars />
    </Page>
  );
}
